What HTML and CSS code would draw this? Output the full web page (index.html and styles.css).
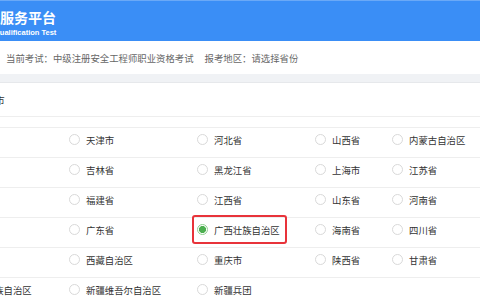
FILE: index.html
```html
<!DOCTYPE html>
<html lang="zh-CN">
<head>
    <meta charset="UTF-8">
    <meta name="viewport" content="width=device-width, initial-scale=1.0">
    <title>考试服务平台</title>
    <link rel="stylesheet" href="styles.css">
</head>
<body>
    <div class="header">
        <div class="title">服务平台</div>
        <div class="subtitle">Qualification Test</div>
    </div>

    <div class="exam-info">
        <span>当前考试：中级注册安全工程师职业资格考试</span>
        <span class="region">报考地区：请选择省份</span>
    </div>

    <div class="panel">
        <div class="panel-head"><span class="head-label">报考省市</span></div>

        <div class="province-list">
            <div class="row">
                <label class="item"><i class="radio"></i>北京市</label>
                <label class="item"><i class="radio"></i>天津市</label>
                <label class="item"><i class="radio"></i>河北省</label>
                <label class="item"><i class="radio"></i>山西省</label>
                <label class="item"><i class="radio"></i>内蒙古自治区</label>
            </div>
            <div class="row">
                <label class="item"><i class="radio"></i>辽宁省</label>
                <label class="item"><i class="radio"></i>吉林省</label>
                <label class="item"><i class="radio"></i>黑龙江省</label>
                <label class="item"><i class="radio"></i>上海市</label>
                <label class="item"><i class="radio"></i>江苏省</label>
            </div>
            <div class="row">
                <label class="item"><i class="radio"></i>安徽省</label>
                <label class="item"><i class="radio"></i>福建省</label>
                <label class="item"><i class="radio"></i>江西省</label>
                <label class="item"><i class="radio"></i>山东省</label>
                <label class="item"><i class="radio"></i>河南省</label>
            </div>
            <div class="row">
                <label class="item"><i class="radio"></i>湖南省</label>
                <label class="item"><i class="radio"></i>广东省</label>
                <label class="item checked marked"><i class="radio"></i>广西壮族自治区</label>
                <label class="item"><i class="radio"></i>海南省</label>
                <label class="item"><i class="radio"></i>四川省</label>
            </div>
            <div class="row">
                <label class="item"><i class="radio"></i>云南省</label>
                <label class="item"><i class="radio"></i>西藏自治区</label>
                <label class="item"><i class="radio"></i>重庆市</label>
                <label class="item"><i class="radio"></i>陕西省</label>
                <label class="item"><i class="radio"></i>甘肃省</label>
            </div>
            <div class="row last">
                <label class="item"><i class="radio"></i>宁夏回族自治区</label>
                <label class="item"><i class="radio"></i>新疆维吾尔自治区</label>
                <label class="item"><i class="radio"></i>新疆兵团</label>
            </div>
        </div>
    </div>
</body>
</html>
```

FILE: styles.css
```css
html, body {
    overflow: hidden;
}
body {
    margin: 0;
    font-family: "Noto Sans CJK SC", "Liberation Sans", sans-serif;
    color: #333;
    background: #fff;
}
.header {
    height: 40px;
    background: #3a8ef6;
    border-top: 1px solid #6aa9f7;
    color: #fff;
}
.title {
    font-size: 14px;
    font-weight: bold;
    line-height: 16px;
    padding-top: 8px;
}
.subtitle {
    font-family: "Liberation Sans", Arial, sans-serif;
    font-size: 7.5px;
    font-weight: bold;
    line-height: 9px;
    margin-top: 3px;
    margin-left: -6px;
}
.exam-info {
    height: 33px;
    display: flex;
    align-items: center;
    padding-left: 6px;
    font-size: 9.4px;
    color: #666;
    border-bottom: 8px solid #f0f2f5;
}
.region {
    margin-left: 11px;
}
.panel {
    padding-top: 1px;
    border-top: 1px solid #e6e8eb;
}
.panel-head {
    height: 32px;
    display: flex;
    align-items: center;
    border-bottom: 1px solid #eeeeee;
    font-size: 9.4px;
    color: #333;
}
.head-label {
    margin-left: -33px;
}
.province-list {
    margin-top: 10px;
    border-top: 1px solid #eeeeee;
}
.row {
    display: grid;
    grid-template-columns: 120px 128px 118px 77px 110px;
    height: 29px;
    margin-left: -51px;
    padding-top: 5px;
    box-sizing: border-box;
    height: 30px;
    border-bottom: 1px solid #eeeeee;
}
.row.last {
    border-bottom: none;
}
.item {
    display: flex;
    align-items: center;
    height: 13px;
    font-size: 9.4px;
    color: #333;
    white-space: nowrap;
    justify-self: start;
    position: relative;
}
.radio {
    width: 11px;
    height: 11px;
    box-sizing: border-box;
    border: 1px solid #d9d9d9;
    border-radius: 50%;
    margin-right: 6px;
    flex-shrink: 0;
    background: #fff;
}
.checked .radio {
    border-color: #8fcf8f;
    background: radial-gradient(circle, #4caf50 0, #4caf50 3.3px, #fff 3.8px);
}
.marked::after {
    content: "";
    position: absolute;
    left: -5px;
    right: -7px;
    top: -8px;
    bottom: -8px;
    border: 2px solid #e8333a;
    border-radius: 3px;
}
```
